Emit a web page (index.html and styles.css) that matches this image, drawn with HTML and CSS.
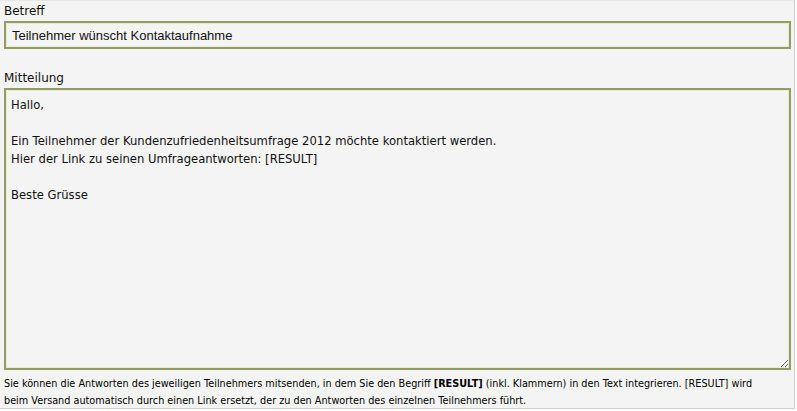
FILE: index.html
```html
<!DOCTYPE html>
<html lang="de">
<head>
    <meta charset="UTF-8">
    <title>Kontaktaufnahme</title>
    <link rel="stylesheet" href="styles.css">
</head>
<body>
    <div class="panel">
        <label class="field-label" for="betreff">Betreff</label>
        <input type="text" id="betreff" class="field-input" value="Teilnehmer wünscht Kontaktaufnahme">

        <label class="field-label label-gap" for="mitteilung">Mitteilung</label>
        <textarea id="mitteilung" class="field-area">Hallo,

Ein Teilnehmer der Kundenzufriedenheitsumfrage 2012 möchte kontaktiert werden.
Hier der Link zu seinen Umfrageantworten: [RESULT]

Beste Grüsse</textarea>

        <p class="hint">Sie können die Antworten des jeweiligen Teilnehmers mitsenden, in dem Sie den Begriff <b>[RESULT]</b> (inkl. Klammern) in den Text integrieren. [RESULT] wird<br>beim Versand automatisch durch einen Link ersetzt, der zu den Antworten des einzelnen Teilnehmers führt.</p>
    </div>
</body>
</html>
```

FILE: styles.css
```css
html, body {
    margin: 0;
    padding: 0;
    background: #ffffff;
}
.panel {
    width: 795px;
    height: 409px;
    box-sizing: border-box;
    background: #f4f4f4;
    border-right: 1px solid #cfcfcf;
    border-bottom: 1px solid #cfcfcf;
    border-top: 1px solid #e6e6e6;
    padding: 2px 4px 0 4px;
    font-family: "DejaVu Sans", Tahoma, sans-serif;
    color: #111;
}
.field-label {
    display: block;
    font-size: 12px;
    line-height: 16px;
    height: 18px;
}
.label-gap {
    margin-top: 21px;
}
.field-input, .field-area {
    display: block;
    width: 787px;
    box-sizing: border-box;
    margin: 0;
    background: #f4f4f4;
    border: 2px solid #939c63;
    box-shadow: inset 0 0 0 1px #e9ecd4;
    color: #111;
    outline: none;
}
.field-input {
    height: 28px;
    padding: 0 6px;
    font-family: "Liberation Sans", Arial, sans-serif;
    font-size: 13px;
}
.field-area {
    height: 282px;
    padding: 6px 5px 4px 5px;
    font-family: "DejaVu Sans", Tahoma, sans-serif;
    font-size: 11.6px;
    line-height: 18px;
    resize: vertical;
}
.hint {
    margin: 5px 0 0 0;
    font-size: 9.7px;
    line-height: 17px;
    color: #000;
    white-space: nowrap;
}
.hint b {
    font-weight: bold;
}
```
